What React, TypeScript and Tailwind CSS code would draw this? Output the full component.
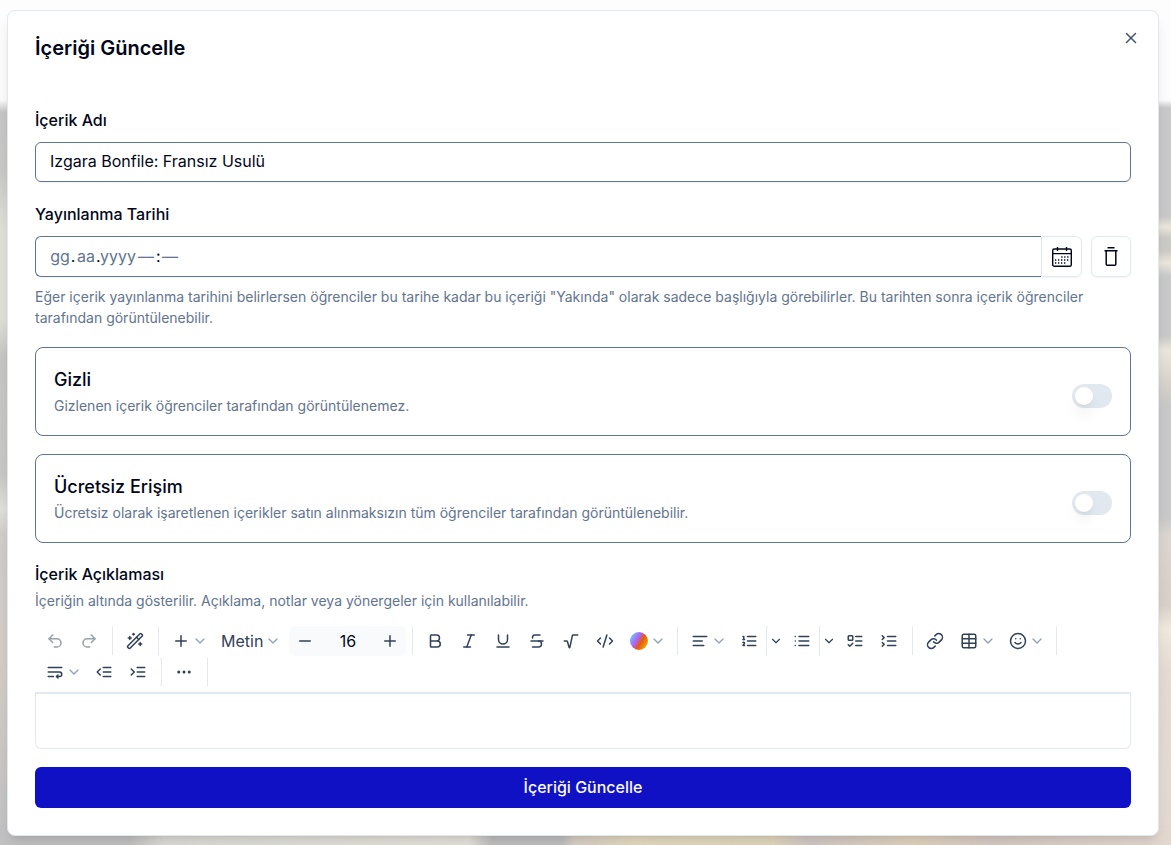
import { useState } from "react";
import type { ReactNode } from "react";
import {
    Bold,
    ChevronDown,
    CodeXml,
    Ellipsis,
    Italic,
    Link,
    Minus,
    Plus,
    Radical,
    Redo2,
    Smile,
    Strikethrough,
    Table,
    Underline,
    Undo2,
    WandSparkles,
    X,
} from "lucide-react";

const linePaths = {
    alignLeft: ["M21 6H3", "M15 12H3", "M17 18H3"],
    ordered: ["M10 6h11", "M10 12h11", "M10 18h11", "M4 6h1v4", "M4 10h2", "M6 18H4c0-1 2-2 2-3s-1-1.5-2-1"],
    bulleted: ["M8 6h13", "M8 12h13", "M8 18h13", "M3 6h.01", "M3 12h.01", "M3 18h.01"],
    todo: ["M4 5h4a1 1 0 0 1 1 1v4a1 1 0 0 1-1 1H4a1 1 0 0 1-1-1V6a1 1 0 0 1 1-1z", "m3 17 2 2 4-4", "M13 6h8", "M13 12h8", "M13 18h8"],
    toggle: ["m3 10 2.5-2.5L3 5", "m3 19 2.5-2.5L3 14", "M10 6h11", "M10 12h11", "M10 18h11"],
    wrap: ["M3 6h18", "M3 12h15a3 3 0 1 1 0 6h-4", "m16 16-2 2 2 2", "M3 18h7"],
    outdent: ["m7 8-4 4 4 4", "M21 12H11", "M21 6H11", "M21 18H11"],
    indent: ["m3 8 4 4-4 4", "M21 12H11", "M21 6H11", "M21 18H11"],
};

const LineIcon = ({ name }: { name: keyof typeof linePaths }) => (
    <svg className="size-[18px]" viewBox="0 0 24 24" fill="none" stroke="currentColor" strokeWidth="2" strokeLinecap="round" strokeLinejoin="round">
        {linePaths[name].map((d) => (
            <path key={d} d={d} />
        ))}
    </svg>
);

const CalendarIcon = () => (
    <svg className="size-5" viewBox="0 0 20 20" fill="none" stroke="currentColor" strokeWidth="1.4">
        <rect x="0.7" y="2" width="18.6" height="17.3" rx="1.6" />
        <path d="M0.7 6.6h18.6M5.5 0v4M14.5 0v4" />
        <path d="M9.2 10h8M3 13h14.2M3 16h11" strokeWidth="1.3" strokeDasharray="1.3 1.7" />
    </svg>
);

const TrashIcon = () => (
    <svg className="size-5" viewBox="0 0 20 20" fill="none" stroke="currentColor" strokeWidth="1.5">
        <path d="M6.5 0.8h7M3.5 3.8h13" />
        <path d="M5.2 4v13.3a1 1 0 0 0 1 1h7.6a1 1 0 0 0 1-1V4" />
    </svg>
);

const Arrow = () => <ChevronDown className="size-4 text-slate-400" />;

const Tool = ({ label, disabled, children }: { label: string; disabled?: boolean; children: ReactNode }) => (
    <button
        type="button"
        aria-label={label}
        disabled={disabled}
        className="flex h-[30px] w-[34px] items-center justify-center rounded-md disabled:opacity-50"
    >
        {children}
    </button>
);

const MenuTool = ({ label, children }: { label: string; children: ReactNode }) => (
    <button type="button" aria-label={label} className="flex h-[30px] w-[49px] items-center gap-0.5 rounded-md pl-2">
        {children}
        <Arrow />
    </button>
);

const SplitTool = ({ label, children }: { label: string; children: ReactNode }) => (
    <div className="flex">
        <Tool label={label}>{children}</Tool>
        <button type="button" aria-label={`${label} seçenekleri`} className="flex h-[30px] w-[19px] items-center justify-center border-l border-slate-200">
            <ChevronDown className="size-3.5" />
        </button>
    </div>
);

const Group = ({ children }: { children: ReactNode }) => (
    <div className="flex items-center">
        {children}
        <div className="mr-[5px] ml-1.5 h-7 w-px bg-slate-200" />
    </div>
);

const Toolbar = () => {
    const [size, setSize] = useState(16);

    return (
        <div className="flex flex-wrap gap-y-px border-b-2 border-slate-200 px-[3px] pb-[5px] text-slate-700">
            <Group>
                <Tool label="Geri al" disabled><Undo2 className="size-[18px]" /></Tool>
                <Tool label="Yinele" disabled><Redo2 className="size-[18px]" /></Tool>
            </Group>
            <Group>
                <Tool label="Yapay zeka"><WandSparkles className="size-[18px]" /></Tool>
            </Group>
            <Group>
                <MenuTool label="Ekle"><Plus className="size-[18px]" /></MenuTool>
                <button type="button" className="flex h-[30px] items-center gap-0.5 px-2 text-base">
                    Metin
                    <Arrow />
                </button>
                <div className="flex h-[30px] items-center rounded-md bg-slate-50">
                    <button type="button" aria-label="Küçült" onClick={() => setSize(size - 1)} className="flex w-8 justify-center">
                        <Minus className="size-[18px]" />
                    </button>
                    <input
                        aria-label="Yazı boyutu"
                        value={size}
                        onChange={(e) => setSize(Number(e.target.value))}
                        className="w-[53px] bg-transparent text-center text-base text-slate-950"
                    />
                    <button type="button" aria-label="Büyüt" onClick={() => setSize(size + 1)} className="flex w-8 justify-center">
                        <Plus className="size-[18px]" />
                    </button>
                </div>
            </Group>
            <Group>
                <Tool label="Kalın"><Bold className="size-[18px]" /></Tool>
                <Tool label="İtalik"><Italic className="size-[18px]" /></Tool>
                <Tool label="Altı çizili"><Underline className="size-[18px]" /></Tool>
                <Tool label="Üstü çizili"><Strikethrough className="size-[18px]" /></Tool>
                <Tool label="Denklem"><Radical className="size-[18px]" /></Tool>
                <Tool label="Kod"><CodeXml className="size-[18px]" /></Tool>
                <MenuTool label="Renk">
                    <span className="size-[18px] rounded-full bg-[linear-gradient(120deg,#67d3fb_5%,#a865f5_40%,#ea580c_60%,#eab308_90%)]" />
                </MenuTool>
            </Group>
            <Group>
                <MenuTool label="Hizala"><LineIcon name="alignLeft" /></MenuTool>
                <SplitTool label="Numaralı liste"><LineIcon name="ordered" /></SplitTool>
                <SplitTool label="Madde listesi"><LineIcon name="bulleted" /></SplitTool>
                <Tool label="Yapılacaklar"><LineIcon name="todo" /></Tool>
                <Tool label="Açılır liste"><LineIcon name="toggle" /></Tool>
            </Group>
            <Group>
                <Tool label="Bağlantı"><Link className="size-[18px]" /></Tool>
                <MenuTool label="Tablo"><Table className="size-[18px]" /></MenuTool>
                <MenuTool label="Emoji"><Smile className="size-[18px]" /></MenuTool>
            </Group>
            <Group>
                <MenuTool label="Satır aralığı"><LineIcon name="wrap" /></MenuTool>
                <Tool label="Girintiyi azalt"><LineIcon name="outdent" /></Tool>
                <Tool label="Girintiyi artır"><LineIcon name="indent" /></Tool>
            </Group>
            <Group>
                <Tool label="Daha fazla"><Ellipsis className="size-[18px]" /></Tool>
            </Group>
        </div>
    );
};

const SwitchCard = ({ id, title, text }: { id: string; title: string; text: string }) => (
    <div className="flex items-center justify-between rounded-lg border border-slate-500 px-[18px] pt-[18px] pb-[17px]">
        <div>
            <label htmlFor={id} className="block text-lg leading-7 font-medium">{title}</label>
            <p className="text-sm leading-6 text-slate-500">{text}</p>
        </div>
        <input
            id={id}
            type="checkbox"
            role="switch"
            className="mt-2 h-6 w-10 appearance-none rounded-full bg-slate-200 p-[3px] before:block before:size-[18px] before:rounded-full before:bg-white before:shadow-lg checked:bg-[#1010c4] checked:before:translate-x-4"
        />
    </div>
);

const segment = "bg-transparent text-center outline-none placeholder:text-slate-500";

export default function App() {
    const [name, setName] = useState("Izgara Bonfile: Fransız Usulü");

    return (
        <div className="relative min-h-screen bg-[#d6d2cc] pt-2.5 pr-3 pb-2 pl-[7px] font-['Inter',sans-serif] text-slate-950">
            {/* blurred page behind the dialog */}
            <div className="absolute inset-0 flex overflow-hidden">
                <div className="flex-1 bg-[linear-gradient(180deg,#fdfdfd_100px,#c6c6c6_112px,#c8c8c6_170px,#e0e0db_230px,#e0e0db_320px,#c6c6c4_355px,#c8c8c6_475px,#e0e0dc_509px,#d0cdca_535px,#d3cdc8_665px,#c4c4c4_812px)]" />
                <div className="flex-1 bg-[linear-gradient(180deg,#fdfdfd_100px,#c9c9c9_108px,#c9c9c9_216px,#ebe7db_227px,#cccac6_238px,#cccac6_250px,#ebe7db_263px,#c9c9c9_276px,#c9c9c9_336px,#ebe7db_350px,#d6d2ca_385px,#c9c9c9_405px,#c9c9c9_518px,#ddd5cf_535px,#dad0ca_605px,#f0e9dc_628px,#e6dbd2_670px,#e3d9d0_845px)]" />
                <div className="absolute inset-x-0 bottom-0 h-5 bg-[linear-gradient(90deg,#c2c2c2_11%,#dfddd8_14%,#e7e4dd_40%,#c0c0c0_42%,#c0c0c0_48%,#d8d0c6_49%,#e6dcc2_54%,#e4d8bf_66%,#d3cac6_69%,#e3d5c0_78%,#d8ccc6_85%,#e2d8d0_96%)]" />
            </div>

            <form
                onSubmit={(e) => e.preventDefault()}
                className="relative rounded-lg border border-slate-200 bg-white px-[27px] pt-[23px] pb-[27px] shadow-lg"
            >
                <div className="flex items-start justify-between">
                    <h1 className="text-xl leading-7 font-semibold">İçeriği Güncelle</h1>
                    <button type="button" aria-label="Kapat" className="-mt-[5px] -mr-[9px] text-slate-600">
                        <X className="size-[18px]" />
                    </button>
                </div>

                <label htmlFor="name" className="mt-[46px] block text-base leading-6 font-medium">İçerik Adı</label>
                <input
                    id="name"
                    value={name}
                    onChange={(e) => setName(e.target.value)}
                    className="mt-2.5 h-10 w-full rounded-md border border-slate-500 px-3.5 pb-0.5 text-base shadow-xs"
                />

                <label htmlFor="day" className="mt-5 block text-base leading-6 font-medium">Yayınlanma Tarihi</label>
                <div className="mt-2.5 flex h-[41px]">
                    <div className="flex flex-1 items-center rounded-l-md border border-r-0 border-slate-500 pb-0.5 pl-3.5 text-base shadow-xs">
                        <input id="day" placeholder="gg" className={`${segment} w-5`} />
                        <span className="w-1.5 text-center">.</span>
                        <input aria-label="Ay" placeholder="aa" className={`${segment} w-5`} />
                        <span className="w-1 text-center">.</span>
                        <input aria-label="Yıl" placeholder="yyyy" className={`${segment} w-9`} />
                        <input aria-label="Saat" placeholder="––" className={`${segment} w-5`} />
                        <span className="w-1 text-center">:</span>
                        <input aria-label="Dakika" placeholder="––" className={`${segment} w-5`} />
                    </div>
                    <button type="button" aria-label="Takvim" className="flex w-[41px] items-center justify-center rounded-r-md border border-slate-200 shadow-xs">
                        <CalendarIcon />
                    </button>
                    <button type="button" aria-label="Tarihi sil" className="ml-[9px] flex w-10 items-center justify-center rounded-md border border-slate-200 shadow-xs">
                        <TrashIcon />
                    </button>
                </div>
                <p className="mt-[9px] text-sm leading-[21px] text-slate-500">
                    Eğer içerik yayınlanma tarihini belirlersen öğrenciler bu tarihe kadar bu içeriği "Yakında" olarak sadece
                    başlığıyla görebilirler. Bu tarihten sonra içerik öğrenciler tarafından görüntülenebilir.
                </p>

                <div className="mt-[19px] flex flex-col gap-[18px]">
                    <SwitchCard id="hidden" title="Gizli" text="Gizlenen içerik öğrenciler tarafından görüntülenemez." />
                    <SwitchCard
                        id="free"
                        title="Ücretsiz Erişim"
                        text="Ücretsiz olarak işaretlenen içerikler satın alınmaksızın tüm öğrenciler tarafından görüntülenebilir."
                    />
                </div>

                <label htmlFor="editor" className="mt-[19px] block text-base leading-6 font-medium">İçerik Açıklaması</label>
                <p className="mt-1 text-sm leading-[21px] text-slate-500">
                    İçeriğin altında gösterilir. Açıklama, notlar veya yönergeler için kullanılabilir.
                </p>

                <div className="mt-[15px]">
                    <Toolbar />
                    <textarea id="editor" className="block h-[55px] w-full resize-none rounded-b-md border border-t-0 border-slate-200 p-4" />
                </div>

                <button type="submit" className="mt-[18px] h-[41px] w-full rounded-md bg-[#1010c4] pb-0.5 text-base font-medium text-slate-50">
                    İçeriği Güncelle
                </button>
            </form>
        </div>
    );
}
